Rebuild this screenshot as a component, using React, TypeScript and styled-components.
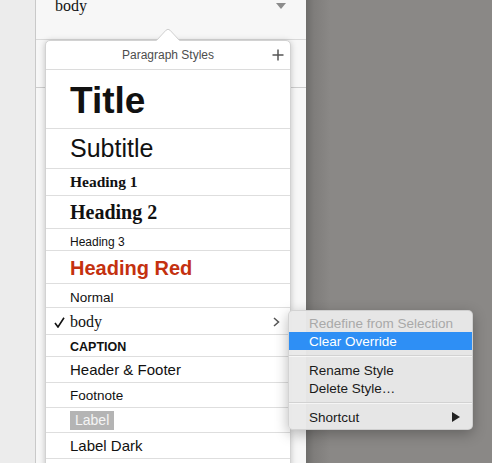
import styled, { createGlobalStyle } from 'styled-components';

const GlobalStyle = createGlobalStyle`
  html, body {
    margin: 0;
    padding: 0;
  }
  body {
    font-family: "Liberation Sans", Arial, sans-serif;
    background: #8a8886;
  }
`;

const Page = styled.div`
  position: relative;
  display: flex;
  width: 492px;
  height: 463px;
  overflow: hidden;
`;

const Rail = styled.div`
  flex: 0 0 35px;
  background: #ececec;
  border-right: 1px solid #c9c9c9;
`;

const Sidebar = styled.aside`
  position: relative;
  flex: 0 0 270px;
  background: #f7f7f7;
`;

const StylePicker = styled.div`
  display: flex;
  align-items: flex-start;
  height: 40px;
  box-sizing: border-box;
  padding: 0 20px 0 19px;
  border-bottom: 1px solid #d9d9d9;
`;

const PickerValue = styled.span`
  font-family: "Liberation Serif", "Times New Roman", serif;
  font-size: 16px;
  line-height: 16px;
  margin-top: -2px;
  color: #111;
`;

const PickerCaret = styled.span`
  margin: 3px 0 0 auto;
  width: 0;
  height: 0;
  border-left: 5px solid transparent;
  border-right: 5px solid transparent;
  border-top: 6px solid #8c8c8c;
`;

const SidebarSection = styled.div`
  height: 48px;
  box-sizing: border-box;
  border-bottom: 1px solid #cdcdcd;
`;

const Canvas = styled.main`
  flex: 1;
  background: linear-gradient(to right, #6e6d6b 0, #7f7d7b 8px, #8a8886 24px);
`;

const Popover = styled.div`
  position: absolute;
  left: 9px;
  top: 40px;
  width: 246px;
  box-sizing: border-box;
  background: #fff;
  border: 1px solid #d2d2d2;
  border-radius: 5px 5px 0 0;
  box-shadow: 0 1px 6px rgba(0, 0, 0, 0.22);
  padding-bottom: 20px;
  z-index: 1;
`;

const PopoverArrow = styled.svg`
  position: absolute;
  top: -13px;
  left: 110px;
`;

const PopoverHeader = styled.div`
  display: grid;
  grid-template-columns: 1fr auto 1fr;
  align-items: center;
  height: 29px;
  box-sizing: border-box;
  border-bottom: 1px solid #dcdcdc;
  padding: 0 6px;
`;

const PopoverTitle = styled.span`
  grid-column: 2;
  font-size: 12px;
  color: #4d4d4d;
`;

const AddButton = styled.button`
  justify-self: end;
  display: flex;
  padding: 0;
  border: 0;
  background: none;
`;

const StyleRow = styled.div<{ $h: number; $shift: number }>`
  display: flex;
  align-items: center;
  height: ${p => p.$h}px;
  box-sizing: border-box;
  padding: ${p => p.$shift}px 10px 0 8px;
  border-bottom: 1px solid #dedede;
`;

const CheckSlot = styled.span`
  flex: 0 0 16px;
  display: flex;
  align-items: center;
`;

const StyleName = styled.span<{
  $serif?: boolean;
  $size: number;
  $bold?: boolean;
  $color?: string;
}>`
  font-family: ${p =>
    p.$serif ? '"Liberation Serif", "Times New Roman", serif' : '"Liberation Sans", Arial, sans-serif'};
  font-size: ${p => p.$size}px;
  font-weight: ${p => (p.$bold ? 700 : 400)};
  color: ${p => p.$color || '#111'};
  white-space: nowrap;
`;

const LabelChip = styled.span`
  font-size: 14px;
  line-height: 19px;
  padding: 0 5px;
  background: #b4b4b4;
  color: #f5f5f5;
`;

const RowChevron = styled.svg`
  margin-left: auto;
`;

const ContextMenu = styled.div`
  position: absolute;
  left: 288px;
  top: 310px;
  width: 185px;
  box-sizing: border-box;
  padding: 3px 0 3px;
  background: rgba(233, 233, 233, 0.97);
  border: 1px solid rgba(0, 0, 0, 0.1);
  border-radius: 5px;
  box-shadow: 0 4px 14px rgba(0, 0, 0, 0.28);
  z-index: 2;
`;

const MenuItem = styled.div<{ $disabled?: boolean; $active?: boolean }>`
  display: flex;
  align-items: center;
  height: 18px;
  padding: 0 12px 0 20px;
  font-size: 13.5px;
  color: ${p => (p.$active ? '#fff' : p.$disabled ? '#a9a9a9' : '#1a1a1a')};
  background: ${p => (p.$active ? '#2e8ff5' : 'transparent')};
`;

const MenuSeparator = styled.div`
  height: 1px;
  margin: 5px 0 5px;
  background: #d2d2d2;
  box-shadow: 0 1px 0 rgba(255, 255, 255, 0.6);
`;

const SubmenuArrow = styled.svg`
  margin-left: auto;
`;

type StyleEntry = {
  name: string;
  h: number;
  shift: number;
  size: number;
  serif?: boolean;
  bold?: boolean;
  color?: string;
  checked?: boolean;
  chip?: boolean;
};

const styles: StyleEntry[] = [
  { name: 'Title', h: 59, shift: 3, size: 37, bold: true },
  { name: 'Subtitle', h: 40, shift: 0, size: 25 },
  { name: 'Heading 1', h: 27, shift: 0, size: 15.5, serif: true, bold: true },
  { name: 'Heading 2', h: 33, shift: 0, size: 20, serif: true, bold: true },
  { name: 'Heading 3', h: 22, shift: 4, size: 12 },
  { name: 'Heading Red', h: 33, shift: 2, size: 20, bold: true, color: '#c4310f' },
  { name: 'Normal', h: 24, shift: 3, size: 13.5 },
  { name: 'body', h: 27, shift: 2, size: 16, serif: true, checked: true },
  { name: 'CAPTION', h: 22, shift: 2, size: 12.5, bold: true },
  { name: 'Header & Footer', h: 26, shift: 0, size: 15 },
  { name: 'Footnote', h: 25, shift: 0, size: 13.5 },
  { name: 'Label', h: 25, shift: 0, size: 14, chip: true },
  { name: 'Label Dark', h: 26, shift: 0, size: 15 },
];

const App = () => {
  return (
    <Page>
      <GlobalStyle />
      <Rail />
      <Sidebar>
        <StylePicker>
          <PickerValue>body</PickerValue>
          <PickerCaret />
        </StylePicker>
        <SidebarSection />

        <Popover>
          <PopoverArrow width="24" height="13" viewBox="0 0 24 13">
            <path d="M0 13 L10 2.2 Q12 0.3 14 2.2 L24 13 Z" fill="#fff" />
            <path d="M0.5 12.5 L10 2.2 Q12 0.3 14 2.2 L23.5 12.5" fill="none" stroke="#cfcfcf" />
          </PopoverArrow>
          <PopoverHeader>
            <PopoverTitle>Paragraph Styles</PopoverTitle>
            <AddButton>
              <svg width="12" height="12" viewBox="0 0 12 12">
                <path d="M6 0.5 V11.5 M0.5 6 H11.5" stroke="#555" strokeWidth="1.5" />
              </svg>
            </AddButton>
          </PopoverHeader>

          {styles.map(s => (
            <StyleRow key={s.name} $h={s.h} $shift={s.shift}>
              <CheckSlot>
                {s.checked && (
                  <svg width="11" height="11" viewBox="0 0 11 11">
                    <path d="M1 6 L4 10 L10 0.8" fill="none" stroke="#111" strokeWidth="1.6" />
                  </svg>
                )}
              </CheckSlot>
              {s.chip ? (
                <LabelChip>{s.name}</LabelChip>
              ) : (
                <StyleName $serif={s.serif} $size={s.size} $bold={s.bold} $color={s.color}>
                  {s.name}
                </StyleName>
              )}
              {s.checked && (
                <RowChevron width="7" height="10" viewBox="0 0 7 10">
                  <path d="M1 1 L5.5 5 L1 9" fill="none" stroke="#555" strokeWidth="1.5" />
                </RowChevron>
              )}
            </StyleRow>
          ))}
        </Popover>
      </Sidebar>
      <Canvas />

      <ContextMenu>
        <MenuItem $disabled>Redefine from Selection</MenuItem>
        <MenuItem $active>Clear Override</MenuItem>
        <MenuSeparator />
        <MenuItem>Rename Style</MenuItem>
        <MenuItem>Delete Style…</MenuItem>
        <MenuSeparator />
        <MenuItem>
          Shortcut
          <SubmenuArrow width="8" height="10" viewBox="0 0 8 10">
            <path d="M0 0 L8 5 L0 10 Z" fill="#222" />
          </SubmenuArrow>
        </MenuItem>
      </ContextMenu>
    </Page>
  );
};

export default App;
